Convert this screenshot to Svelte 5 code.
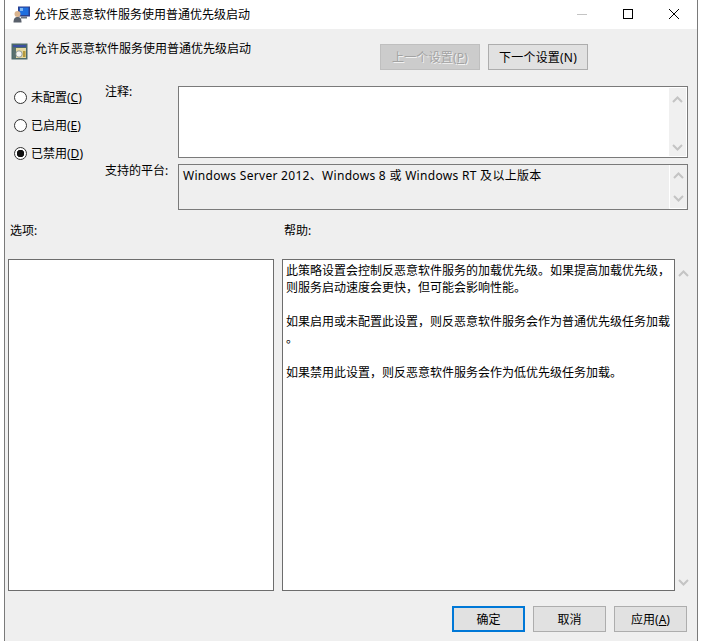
<script>
	const states = [
		{ id: 'none', text: '未配置', key: 'C' },
		{ id: 'on', text: '已启用', key: 'E' },
		{ id: 'off', text: '已禁用', key: 'D' }
	];
	let selected = $state('off');

	const title = '允许反恶意软件服务使用普通优先级启动';
	const helpLines = [
		'此策略设置会控制反恶意软件服务的加载优先级。如果提高加载优先级，',
		'则服务启动速度会更快，但可能会影响性能。',
		'',
		'如果启用或未配置此设置，则反恶意软件服务会作为普通优先级任务加载',
		'。',
		'',
		'如果禁用此设置，则反恶意软件服务会作为低优先级任务加载。'
	];
</script>

{#snippet chevron(dir)}
	<svg class="chevron" width="11" height="7" viewBox="0 0 11 7">
		<path d={dir === 'up' ? 'M1 6 L5.5 1.5 L10 6' : 'M1 1 L5.5 5.5 L10 1'} />
	</svg>
{/snippet}

<div class="window">
	<div class="titlebar">
		<svg class="app-icon" width="17" height="17" viewBox="0 0 17 17">
			<rect x="5" y="0.5" width="12" height="10" fill="#2a3f8f" />
			<rect x="6.5" y="1.5" width="9" height="7.5" fill="#1f6fe0" />
			<rect x="7" y="2" width="3" height="3" fill="#7db8f5" />
			<rect x="8" y="10.5" width="6" height="2" fill="#6d7480" />
			<circle cx="4.5" cy="8" r="3" fill="#d9b48f" />
			<path d="M0.5 16.5 C0.5 12 2.5 11 4.5 11 C7 11 8.5 12 8.5 16.5 Z" fill="#59606b" />
		</svg>
		<span class="title-text">{title}</span>
		<div class="caption">
			<svg width="16" height="16" viewBox="0 0 16 16"><path d="M3 8.5 H13" stroke="#c4c4c4" /></svg>
			<svg width="16" height="16" viewBox="0 0 16 16"><rect x="3.5" y="3.5" width="9" height="9" fill="none" stroke="#000" /></svg>
			<svg width="16" height="16" viewBox="0 0 16 16"><path d="M3 3 L13 13 M13 3 L3 13" stroke="#000" /></svg>
		</div>
	</div>

	<div class="body">
		<header class="head">
			<svg class="policy-icon" width="17" height="17" viewBox="0 0 17 17">
				<rect x="0.5" y="0.5" width="16" height="16" fill="#4d6a6a" />
				<rect x="2" y="2" width="13" height="2" fill="#3a4fa0" />
				<rect x="2" y="5" width="13" height="10" fill="#e6d9a0" />
				<rect x="2" y="5" width="3" height="10" fill="#59706e" />
				<circle cx="8" cy="11" r="3.2" fill="#f4f4f0" stroke="#6c7a7a" stroke-width="0.7" />
				<rect x="12" y="8" width="2.5" height="6" fill="#b59a3c" />
			</svg>
			<span class="head-title">{title}</span>
			<div class="nav">
				<button class="btn nav-btn" disabled>上一个设置(<u>P</u>)</button>
				<button class="btn nav-btn">下一个设置(N)</button>
			</div>
		</header>

		<section class="config">
			<div class="radios">
				{#each states as s}
					<label class="radio">
						<input type="radio" name="state" value={s.id} bind:group={selected} />
						<span>{s.text}(<u>{s.key}</u>)</span>
					</label>
				{/each}
			</div>

			<span class="field-label notes-label">注释:</span>
			<div class="box notes">
				<div class="box-text"></div>
				<div class="scroll notes-scroll">
					{@render chevron('up')}
					{@render chevron('down')}
				</div>
			</div>

			<span class="field-label platform-label">支持的平台:</span>
			<div class="box platform">
				<div class="box-text">Windows Server 2012、Windows 8 或 Windows RT 及以上版本</div>
				<div class="scroll platform-scroll">
					{@render chevron('up')}
					{@render chevron('down')}
				</div>
			</div>
		</section>

		<div class="pane-labels">
			<span class="options-label">选项:</span>
			<span>帮助:</span>
		</div>

		<section class="panes">
			<div class="pane options"></div>
			<div class="pane help">
				{#each helpLines as line}
					<p>{line}</p>
				{/each}
			</div>
			<div class="scroll help-scroll">
				{@render chevron('up')}
				{@render chevron('down')}
			</div>
		</section>

		<footer class="actions">
			<button class="btn action default">确定</button>
			<button class="btn action">取消</button>
			<button class="btn action">应用(<u>A</u>)</button>
		</footer>
	</div>
</div>

<style>
	:global(body) {
		background: #fff;
	}

	.window {
		box-sizing: border-box;
		width: 694px;
		height: 641px;
		margin-left: 4px;
		border-left: 1px solid #7a7a7a;
		border-right: 1px solid #7a7a7a;
		display: flex;
		flex-direction: column;
		font-family: "Noto Sans", "Noto Sans CJK SC", sans-serif;
		font-size: 12px;
		line-height: 17px;
		color: #000;
		overflow: hidden;
	}

	.titlebar {
		flex: none;
		height: 29px;
		background: #fff;
		display: flex;
		align-items: center;
		padding-left: 8px;
	}

	.app-icon {
		margin-right: 4px;
		margin-top: -1px;
	}

	.title-text {
		margin-top: -1px;
	}

	.caption {
		margin-left: auto;
		display: flex;
		gap: 30px;
		padding-right: 15px;
		margin-top: -1px;
	}

	.body {
		flex: 1;
		display: flex;
		flex-direction: column;
		background: #efefef;
	}

	.head {
		flex: none;
		height: 57px;
		box-sizing: border-box;
		padding: 15px 0 0 6px;
		display: flex;
		align-items: flex-start;
	}

	.policy-icon {
		margin-top: -1px;
		margin-right: 7px;
	}

	.head-title {
		margin-top: -4px;
	}

	.nav {
		margin-left: auto;
		display: flex;
		gap: 8px;
		padding-right: 109px;
	}

	.btn {
		box-sizing: border-box;
		height: 26px;
		padding: 0;
		background: #e1e1e1;
		border: 1px solid #adadad;
		border-radius: 0;
		font: inherit;
		color: #000;
	}

	.btn:disabled {
		background: #ccc;
		border-color: #bfbfbf;
		color: #a3a3a3;
		text-shadow: 1px 1px 0 #f2f2f2;
	}

	.nav-btn {
		width: 100px;
		letter-spacing: 0.2px;
	}

	.config {
		flex: none;
		display: grid;
		grid-template-columns: 100px 73px 510px;
		grid-template-rows: 72px 46px;
		row-gap: 6px;
	}

	.radios {
		grid-row: 1 / 3;
		display: flex;
		flex-direction: column;
		gap: 8px;
		padding: 1px 0 0 9px;
	}

	.radio {
		height: 20px;
		display: flex;
		align-items: center;
		gap: 4px;
	}

	.radio input {
		appearance: none;
		box-sizing: border-box;
		width: 13px;
		height: 13px;
		margin: 0;
		border: 1px solid #333;
		border-radius: 50%;
		background: #fff;
		flex: none;
	}

	.radio input:checked {
		background: radial-gradient(circle, #111 0 3.5px, #fff 4px);
	}

	.field-label {
		line-height: 17px;
	}

	.notes-label {
		grid-row: 1;
		grid-column: 2;
		margin-top: -3px;
	}

	.platform-label {
		grid-row: 2;
		grid-column: 2;
		margin-top: -2px;
	}

	.box {
		box-sizing: border-box;
		grid-column: 3;
		display: flex;
		border: 1px solid #7a7a7a;
	}

	.notes {
		background: #fff;
	}

	.platform {
		background: #efefef;
	}

	.box-text {
		flex: 1;
		padding: 2px 4px;
		letter-spacing: 0.3px;
	}

	.scroll {
		flex: none;
		width: 17px;
		display: flex;
		flex-direction: column;
		align-items: center;
		justify-content: space-between;
		box-sizing: border-box;
		background: #f0f0f0;
	}

	.notes-scroll {
		margin: 1px;
		padding: 8px 0 5px;
	}

	.platform-scroll {
		border-left: 1px solid #fff;
		border-bottom: 1px solid #fff;
		padding: 7px 0 6px;
		margin-right: 1px;
		background: transparent;
	}

	.chevron {
		display: block;
	}

	.chevron path {
		fill: none;
		stroke: #c4c4c4;
		stroke-width: 2;
	}

	.pane-labels {
		flex: none;
		height: 49px;
		box-sizing: border-box;
		padding: 12px 0 0 5px;
		display: flex;
	}

	.options-label {
		width: 274px;
	}

	.panes {
		flex: none;
		height: 332px;
		display: flex;
		padding-left: 3px;
	}

	.pane {
		box-sizing: border-box;
		background: #fff;
		border: 1px solid #6d6d6d;
	}

	.options {
		width: 266px;
		margin-right: 8px;
	}

	.help {
		width: 393px;
		padding: 2px 0 0 3px;
		white-space: nowrap;
		overflow: hidden;
	}

	.help p {
		margin: 0;
		height: 17px;
	}

	.help-scroll {
		background: transparent;
		padding: 11px 0 5px;
	}

	.actions {
		flex: none;
		display: flex;
		justify-content: flex-end;
		gap: 8px;
		padding: 15px 10px 0 0;
	}

	.action {
		width: 73px;
	}

	.action.default {
		border: 2px solid #0078d7;
	}
</style>
